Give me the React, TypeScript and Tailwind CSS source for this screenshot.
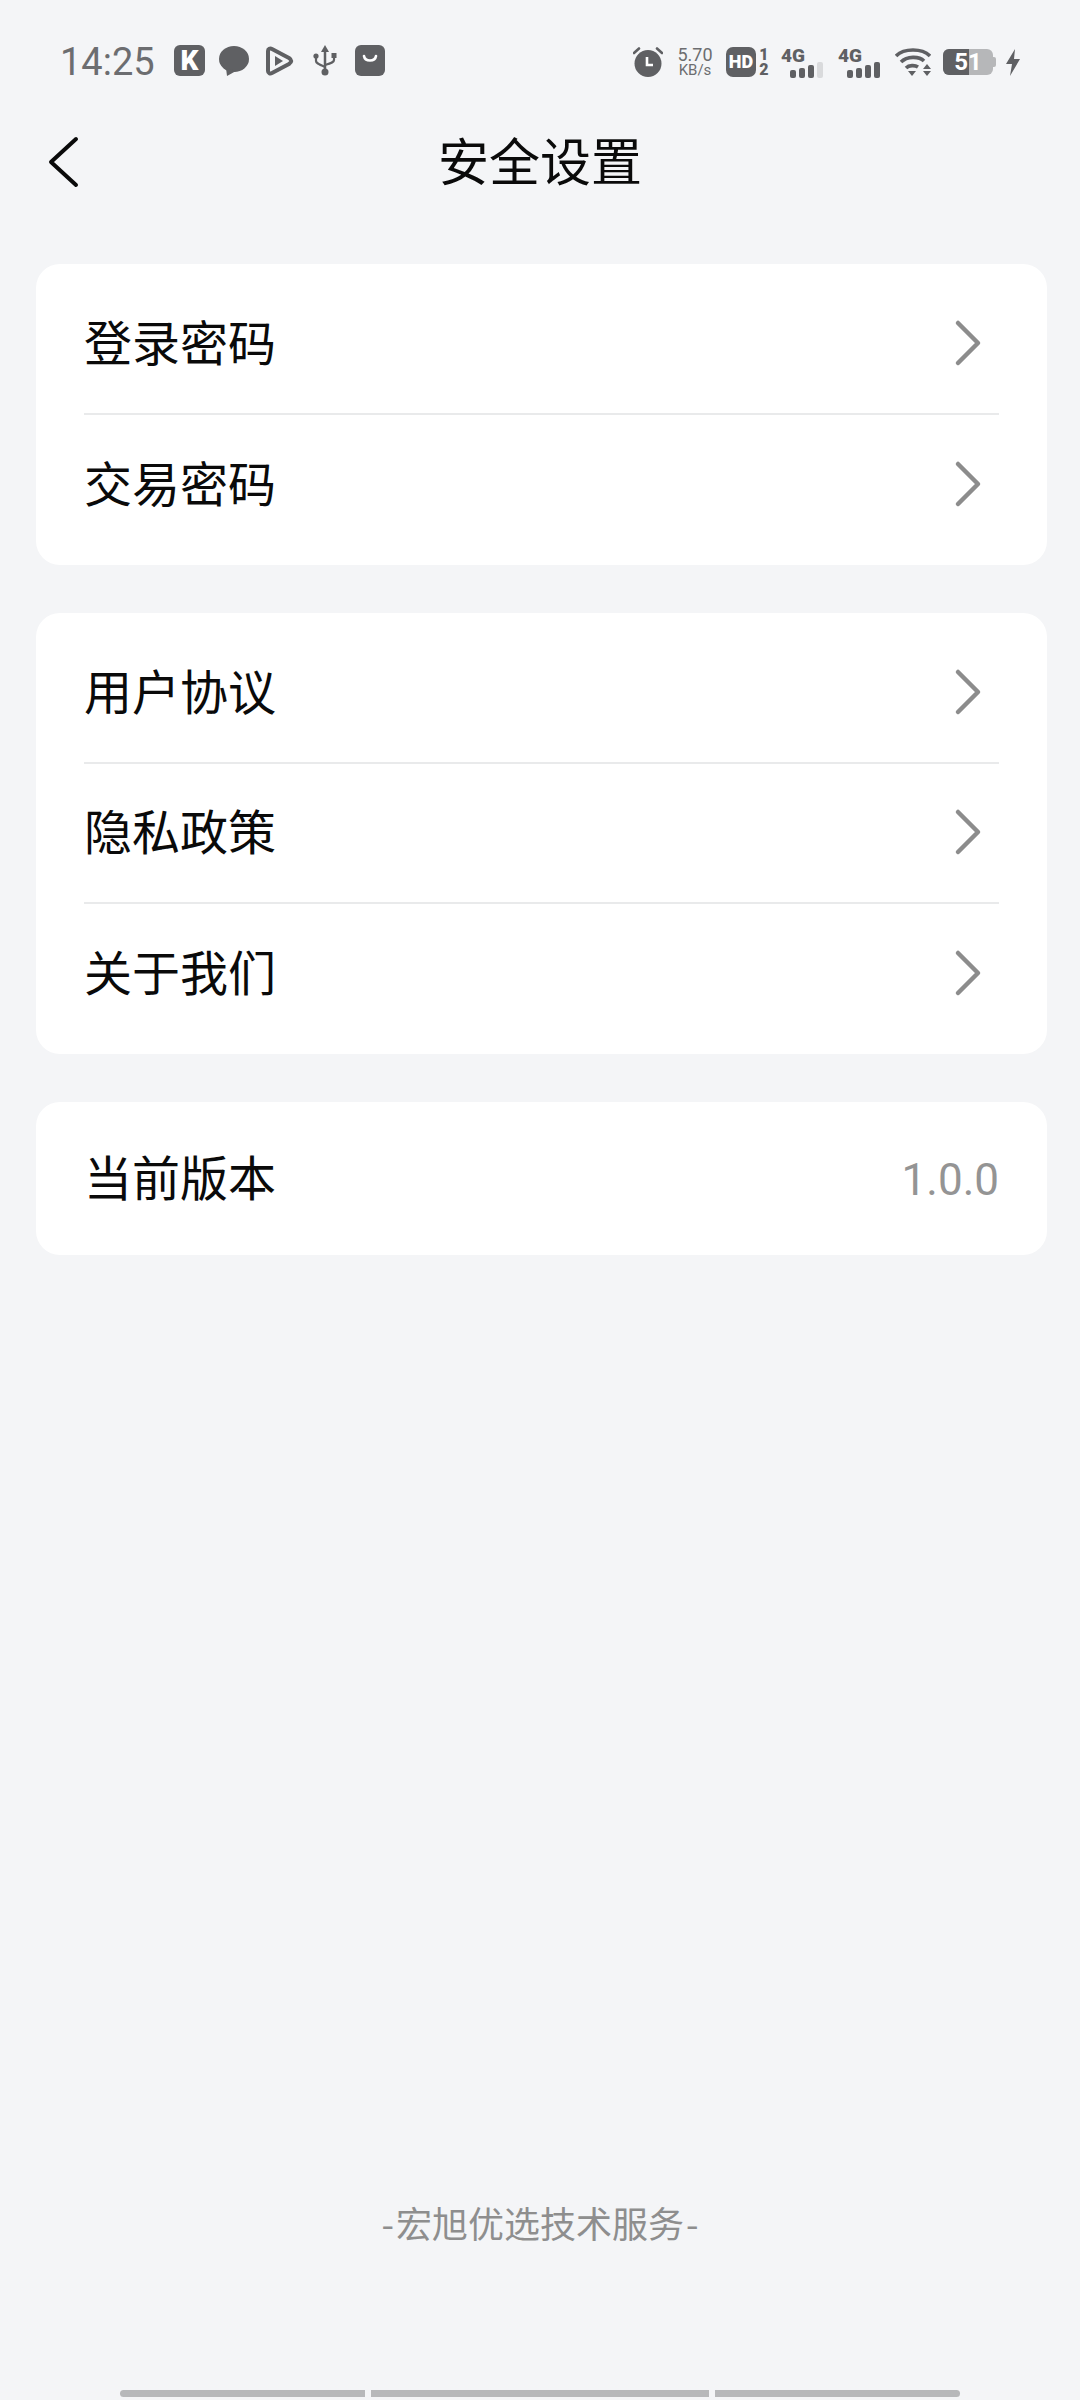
const cjk = "font-['Noto_Sans_CJK_SC','Noto_Sans',sans-serif]";

function Chevron() {
  return (
    <svg width="28" height="48" viewBox="0 0 28 48" fill="none" className="mr-[17px] mb-[2px]">
      <path d="M4 4 L24 24 L4 44" stroke="#8c8c8c" strokeWidth="4.5" strokeLinecap="round" strokeLinejoin="round" />
    </svg>
  );
}

function Row({ label, divider }: { label: string; divider?: boolean }) {
  return (
    <div className={`flex h-[140px] items-center justify-between ${divider ? 'border-b-[2px] border-[#e9eaeb]' : ''}`}>
      <span className="pb-[8px] text-[48px] leading-none text-[#0a0a0a]">{label}</span>
      <Chevron />
    </div>
  );
}

function Card({ children }: { children: React.ReactNode }) {
  return <div className="mb-[48px] rounded-[24px] bg-white px-[48px] pb-[10px] pt-[11px]">{children}</div>;
}

function Signal({ last }: { last: string }) {
  return (
    <div className="flex w-[46px] flex-col">
      <span className="font-['Roboto',sans-serif] text-[19px] font-black leading-[18px] text-[#5f6063]">4G</span>
      <svg width="46" height="16" viewBox="0 0 46 16" className="mt-[-3px]">
        <rect x="9" y="8" width="6" height="8" rx="2" fill="#5f6063" />
        <rect x="18" y="6" width="6" height="10" rx="2" fill="#5f6063" />
        <rect x="27" y="3" width="6" height="13" rx="2" fill="#5f6063" />
        <rect x="36" y="0" width="6" height="16" rx="2" fill={last} />
      </svg>
    </div>
  );
}

function StatusBar() {
  return (
    <div className="flex h-[90px] items-end justify-between pb-[6px] pl-[60px] pr-[60px] text-[#5f6063]">
      <div className="flex items-center">
        <span className="w-[114px] font-['Roboto',sans-serif] text-[38px] leading-[44px] text-[#6c6d70]">14:25</span>
        {/* k app */}
        <div className="mb-[3px] flex h-[31px] w-[31px] items-center justify-center rounded-[6px] bg-[#5f6063]">
          <span className="font-['Roboto',sans-serif] text-[28px] font-black leading-none text-white">K</span>
        </div>
        {/* chat bubble */}
        <svg width="30" height="30" viewBox="0 0 30 30" className="mb-[3px] ml-[14px]">
          <ellipse cx="15" cy="13" rx="15" ry="13" fill="#5f6063" />
          <path d="M7 22 L8 30 L17 25 Z" fill="#5f6063" />
        </svg>
        {/* play */}
        <svg width="30" height="30" viewBox="0 0 30 30" fill="none" className="mb-[3px] ml-[15px]">
          <path d="M4 5 C4 3 6 2 8 3 L25 12 C28 14 28 16 25 18 L8 27 C6 28 4 27 4 25 Z" stroke="#5f6063" strokeWidth="4" strokeLinejoin="round" />
          <path d="M11 10 L19 15 L11 20 Z" fill="#5f6063" />
        </svg>
        {/* usb */}
        <svg width="24" height="32" viewBox="0 0 24 32" fill="none" className="mb-[3px] ml-[19px]">
          <path d="M12 0 L16 7 L8 7 Z" fill="#5f6063" />
          <path d="M12 6 V27" stroke="#5f6063" strokeWidth="2.5" />
          <circle cx="12" cy="27" r="3.5" fill="#5f6063" />
          <path d="M3 12 V16 C3 18 5 19 12 22" stroke="#5f6063" strokeWidth="2.2" />
          <path d="M21 12 V15 C21 17 19 18 12 20" stroke="#5f6063" strokeWidth="2.2" />
          <circle cx="3" cy="11" r="2.6" fill="#5f6063" />
          <rect x="18.5" y="8" width="5" height="5" fill="#5f6063" />
        </svg>
        {/* bag */}
        <svg width="30" height="31" viewBox="0 0 30 31" fill="none" className="mb-[3px] ml-[18px]">
          <rect width="30" height="31" rx="6" fill="#5f6063" />
          <path d="M9 11 C10 17 20 17 21 11" stroke="#fff" strokeWidth="2.6" strokeLinecap="round" />
        </svg>
      </div>
      <div className="mb-[6px] flex items-center">
        {/* alarm */}
        <svg width="30" height="30" viewBox="0 0 30 30" fill="none">
          <circle cx="15" cy="16.5" r="13.5" fill="#5f6063" />
          <path d="M1 6 L6 1.5 M29 6 L24 1.5" stroke="#5f6063" strokeWidth="2.6" strokeLinecap="round" />
          <path d="M14 10 V18 H20" stroke="#fff" strokeWidth="2.6" />
        </svg>
        <div className="ml-[14px] flex w-[36px] flex-col items-center font-['Roboto',sans-serif] text-[#6c6d70]">
          <span className="text-[18px] leading-[17px]">5.70</span>
          <span className="text-[15px] leading-[15px]">KB/s</span>
        </div>
        <div className="ml-[13px] flex h-[30px] w-[30px] items-center justify-center rounded-[7px] bg-[#5f6063]">
          <span className="font-['Roboto',sans-serif] text-[18px] font-black leading-none text-white">HD</span>
        </div>
        <div className="ml-[2px] flex w-[12px] flex-col items-center font-['Roboto',sans-serif] text-[16px] font-black leading-[15px]">
          <span>1</span>
          <span>2</span>
        </div>
        <div className="ml-[11px]"><Signal last="#d9dadc" /></div>
        <div className="ml-[11px]"><Signal last="#5f6063" /></div>
        {/* wifi */}
        <svg width="36" height="30" viewBox="0 0 36 30" fill="none" className="ml-[11px]">
          <path d="M1 9 C9 1 27 1 35 9" stroke="#5f6063" strokeWidth="3.6" />
          <path d="M6 15 C12 9 24 9 29 14" stroke="#5f6063" strokeWidth="3.6" />
          <path d="M11 21 C14 18 20 18 23 20" stroke="#5f6063" strokeWidth="3.6" />
          <path d="M13 24 L21 24 L17 29 Z" fill="#5f6063" />
          <path d="M28 22 L36 22 L32 17 Z M28 24 L36 24 L32 29 Z" fill="#5f6063" />
        </svg>
        {/* battery */}
        <div className="relative ml-[12px] h-[26px] w-[50px] overflow-hidden rounded-[6px] bg-[#b6b7b9]">
          <div className="h-full w-[26px] bg-[#5f6063]" />
          <span className="absolute inset-0 flex items-center justify-center font-['Roboto',sans-serif] text-[24px] font-bold leading-none text-white">51</span>
        </div>
        <div className="h-[10px] w-[3px] rounded-r-[2px] bg-[#b6b7b9]" />
        {/* bolt */}
        <svg width="14" height="27" viewBox="0 0 14 27" className="ml-[10px]">
          <path d="M9 0 L0 15 H6 L4 27 L14 10 H8 Z" fill="#5f6063" />
        </svg>
      </div>
    </div>
  );
}

export default function App() {
  return (
    <div className={`flex h-[2400px] w-[1080px] flex-col overflow-hidden bg-[#f4f5f7] ${cjk}`}>
      <StatusBar />
      {/* header */}
      <div className="relative mt-[20px] flex h-[104px] items-center justify-center">
        <svg width="32" height="52" viewBox="0 0 32 52" fill="none" className="absolute left-[47px] top-[26px]">
          <path d="M29 3 L4 26 L29 49" stroke="#0a0a0a" strokeWidth="4" strokeLinecap="round" strokeLinejoin="round" />
        </svg>
        <span className="pb-[6px] text-[51px] leading-none text-[#0a0a0a]">安全设置</span>
      </div>
      <div className="mt-[50px] pl-[36px] pr-[33px]">
        <Card>
          <Row label="登录密码" divider />
          <Row label="交易密码" />
        </Card>
        <Card>
          <Row label="用户协议" divider />
          <Row label="隐私政策" divider />
          <Row label="关于我们" />
        </Card>
        <div className="flex h-[153px] items-center justify-between rounded-[24px] bg-white px-[48px]">
          <span className="pb-[8px] text-[48px] leading-none text-[#0a0a0a]">当前版本</span>
          <span className="pt-[3px] font-['Roboto',sans-serif] text-[44px] font-normal leading-none text-[#949494]">1.0.0</span>
        </div>
      </div>
      <div className="mt-auto flex justify-center pb-[150px] text-[36px] leading-none text-[#8e8e8e]">
        <span className="mr-[2px]">-</span>宏旭优选技术服务<span className="ml-[2px]">-</span>
      </div>
      <div className="mb-[3px] flex h-[7px] gap-[6px] px-[120px]">
        <div className="w-[245px] rounded-l-full bg-[#b7b8ba]" />
        <div className="w-[338px] bg-[#b7b8ba]" />
        <div className="w-[245px] rounded-r-full bg-[#b7b8ba]" />
      </div>
    </div>
  );
}
